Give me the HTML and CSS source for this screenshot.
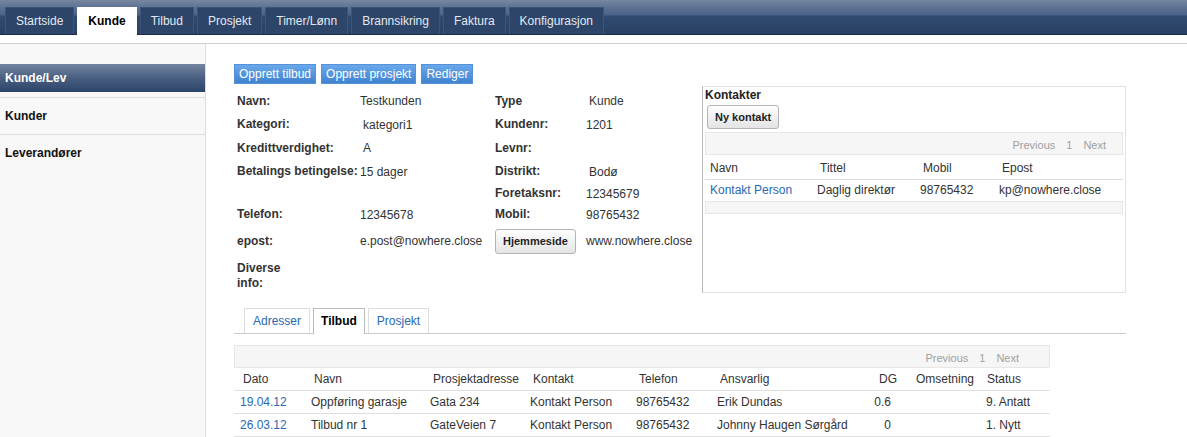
FILE: index.html
```html
<!DOCTYPE html>
<html>
<head>
    <title>Kunde - Testkunden</title>
    <link rel="stylesheet" href="styles.css">
</head>
<body>
    <div class="topbar">
        <a class="tab">Startside</a>
        <a class="tab active">Kunde</a>
        <a class="tab">Tilbud</a>
        <a class="tab">Prosjekt</a>
        <a class="tab">Timer/Lønn</a>
        <a class="tab">Brannsikring</a>
        <a class="tab">Faktura</a>
        <a class="tab">Konfigurasjon</a>
    </div>

    <div class="page">
        <div class="sidebar">
            <div class="side-head">Kunde/Lev</div>
            <div class="side-item">Kunder</div>
            <div class="side-item">Leverandører</div>
        </div>

        <div class="main">
            <div class="actions">
                <button class="btn-blue">Opprett tilbud</button>
                <button class="btn-blue">Opprett prosjekt</button>
                <button class="btn-blue">Rediger</button>
            </div>

            <div class="overview">
                <div class="info">
                    <div class="lbl">Navn:</div>
                    <div class="val">Testkunden</div>
                    <div class="lbl">Type</div>
                    <div class="val pad">Kunde</div>

                    <div class="lbl">Kategori:</div>
                    <div class="val pad">kategori1</div>
                    <div class="lbl">Kundenr:</div>
                    <div class="val">1201</div>

                    <div class="lbl">Kredittverdighet:</div>
                    <div class="val pad">A</div>
                    <div class="lbl">Levnr:</div>
                    <div class="val"></div>

                    <div class="lbl">Betalings betingelse:</div>
                    <div class="val">15 dager</div>
                    <div class="lbl">Distrikt:</div>
                    <div class="val pad">Bodø</div>

                    <div></div>
                    <div></div>
                    <div class="lbl">Foretaksnr:</div>
                    <div class="val">12345679</div>

                    <div class="lbl">Telefon:</div>
                    <div class="val">12345678</div>
                    <div class="lbl">Mobil:</div>
                    <div class="val">98765432</div>

                    <div class="lbl">epost:</div>
                    <div class="val">e.post@nowhere.close</div>
                    <div><button class="btn-gray">Hjemmeside</button></div>
                    <div class="val">www.nowhere.close</div>

                    <div class="lbl">Diverse<br>info:</div>
                    <div></div>
                    <div></div>
                    <div></div>
                </div>

                <div class="contacts">
                    <div class="contacts-title">Kontakter</div>
                    <button class="btn-gray new-contact">Ny kontakt</button>
                    <div class="pager">
                        <span>Previous</span><span>1</span><span>Next</span>
                    </div>
                    <table class="grid contact-grid">
                        <thead>
                            <tr>
                                <th class="k1">Navn</th>
                                <th class="k2">Tittel</th>
                                <th class="k3">Mobil</th>
                                <th class="k4">Epost</th>
                            </tr>
                        </thead>
                        <tbody>
                            <tr>
                                <td><a class="link">Kontakt Person</a></td>
                                <td>Daglig direktør</td>
                                <td>98765432</td>
                                <td>kp@nowhere.close</td>
                            </tr>
                        </tbody>
                    </table>
                    <div class="pager-foot"></div>
                </div>
            </div>

            <div class="subtabs">
                <a class="subtab">Adresser</a>
                <a class="subtab active">Tilbud</a>
                <a class="subtab">Prosjekt</a>
            </div>

            <div class="list">
                <div class="pager wide">
                    <span>Previous</span><span>1</span><span>Next</span>
                </div>
                <table class="grid offer-grid">
                    <thead>
                        <tr>
                            <th class="c-dato">Dato</th>
                            <th class="c-navn">Navn</th>
                            <th class="c-adr">Prosjektadresse</th>
                            <th class="c-kontakt">Kontakt</th>
                            <th class="c-tlf">Telefon</th>
                            <th class="c-ansv">Ansvarlig</th>
                            <th class="c-dg num">DG</th>
                            <th class="c-oms">Omsetning</th>
                            <th class="c-status">Status</th>
                        </tr>
                    </thead>
                    <tbody>
                        <tr>
                            <td><a class="link">19.04.12</a></td>
                            <td>Oppføring garasje</td>
                            <td>Gata 234</td>
                            <td>Kontakt Person</td>
                            <td>98765432</td>
                            <td>Erik Dundas</td>
                            <td class="num">0.6</td>
                            <td></td>
                            <td>9. Antatt</td>
                        </tr>
                        <tr>
                            <td><a class="link">26.03.12</a></td>
                            <td>Tilbud nr 1</td>
                            <td>GateVeien 7</td>
                            <td>Kontakt Person</td>
                            <td>98765432</td>
                            <td>Johnny Haugen Sørgård</td>
                            <td class="num">0</td>
                            <td></td>
                            <td>1. Nytt</td>
                        </tr>
                    </tbody>
                </table>
            </div>
        </div>
    </div>
</body>
</html>
```

FILE: styles.css
```css
* { box-sizing: border-box; }
body { margin: 0; font-family: 'Liberation Sans', Arial, sans-serif; font-size: 12px; color: #333; background: #fff; }
button { font-family: 'Liberation Sans', Arial, sans-serif; cursor: pointer; }
a { cursor: pointer; }

/* top navigation */
.topbar { height: 35px; display: flex; align-items: flex-end; gap: 3px; padding-left: 5px; border-bottom: 1px solid #1d2c42;
    background: linear-gradient(#76879f 0, #5c7093 8px, #4b628a 15px, #304b71 16px, #2a4165 34px); }
.tab { height: 27px; line-height: 27px; padding: 0 10px; color: #e4e9f1; background: #2c4568; border: 1px solid #3b5479; border-bottom: none; }
.tab.active { background: #fff; color: #000; font-weight: bold; border-color: #fff; height: 28px; margin-bottom: -1px; }

.page { display: flex; margin-top: 8px; border-top: 1px solid #ccc; min-height: calc(100vh - 43px); }

/* left menu */
.sidebar { width: 206px; flex: none; background: #f8f8f8; border-right: 1px solid #ddd; padding-top: 20px; }
.side-head { height: 28px; line-height: 28px; padding-left: 5px; margin-bottom: 5px; color: #fff; font-weight: bold; background: linear-gradient(#72849f, #4a5f82 50%, #2b4468); }
.side-item { height: 37px; line-height: 36px; padding-left: 5px; border-top: 1px solid #ddd; font-weight: bold; color: #111; }

.main { width: 920px; padding: 20px 0 0 28px; }

/* buttons */
.actions { display: flex; gap: 5px; height: 20px; }
.btn-blue { height: 20px; padding: 0 4px; font-size: 12px; color: #fff; background: linear-gradient(#69a8ea, #3f83d1); border: 1px solid #5592d8; border-radius: 0; }
.btn-gray { height: 25px; padding: 0 7px; font-size: 11px; font-weight: bold; color: #222; background: linear-gradient(#fefefe, #e4e4e4); border: 1px solid #b4b4b4; border-radius: 3px; }

/* customer info */
.overview { display: flex; margin-top: 2px; }
.info { width: 468px; flex: none; display: grid; grid-template-columns: 123px 135px 91px auto; grid-template-rows: 24px 23px 24px 23px 21px 21px 32px 37px; align-items: center; padding: 3px 0 0 3px; }
.lbl { font-weight: bold; color: #333; line-height: 15px; }
.val { color: #333; white-space: nowrap; }
.val.pad { padding-left: 3px; }

/* contacts box */
.contacts { width: 424px; height: 207px; border: 1px solid #e2e2e2; border-left-color: #b8b8b8; padding: 1px 2px 0 2px; }
.contacts-title { font-weight: bold; color: #222; line-height: 14px; }
.new-contact { display: block; height: 24px; margin: 3px 0 0 2px; }

.pager { height: 23px; display: flex; justify-content: flex-end; align-items: center; gap: 11px; padding: 2px 16px 0 0; margin-top: 3px; font-size: 11px; color: #a0a0a0; background: #f6f6f6; border: 1px solid #e7e7e7; }
.pager.wide { width: 816px; margin-top: 0; padding-right: 30px; }
.pager-foot { height: 13px; background: #f6f6f6; border: 1px solid #e7e7e7; }

.grid { border-collapse: collapse; table-layout: fixed; }
.grid th { font-weight: normal; text-align: left; color: #333; white-space: nowrap; }
.grid td { color: #333; white-space: nowrap; }
.link { color: #2a68b1; }

.contact-grid { width: 418px; margin-top: 2px; }
.contact-grid th { height: 22px; padding: 0 0 0 7px; border-bottom: 1px solid #dcdcdc; }
.contact-grid td { height: 22px; padding: 0 0 0 4px; }
.contact-grid th:first-child, .contact-grid td:first-child { padding-left: 5px; }
.k1 { width: 108px; }
.k2 { width: 103px; }
.k3 { width: 79px; }
.k4 { width: 128px; }

/* bottom tabs */
.subtabs { width: 892px; display: flex; gap: 3px; padding-left: 10px; margin-top: 14px; border-bottom: 1px solid #ccc; }
.subtab { height: 25px; line-height: 24px; padding: 0 8px; color: #2a68b1; border: 1px solid #ddd; border-bottom: none; background: #fff; }
.subtab.active { color: #000; font-weight: bold; border-color: #bbb; height: 26px; margin-bottom: -1px; padding: 0 7px; }

.list { margin-top: 11px; }
.offer-grid { width: 816px; }
.offer-grid th { height: 22px; padding: 0 0 0 9px; border-bottom: 1px solid #e0e0e0; }
.offer-grid td { height: 23px; padding: 0 0 0 6px; border-bottom: 1px solid #e0e0e0; }
.offer-grid th.num { text-align: right; padding: 0 10px 0 0; }
.offer-grid td.num { text-align: right; padding: 0 16px 0 0; }
.c-dato { width: 71px; }
.c-navn { width: 119px; }
.c-adr { width: 100px; }
.c-kontakt { width: 106px; }
.c-tlf { width: 81px; }
.c-ansv { width: 155px; }
.c-dg { width: 41px; }
.c-oms { width: 73px; }
.c-status { width: 70px; }
.offer-grid th.c-status { padding-left: 7px; }
```
